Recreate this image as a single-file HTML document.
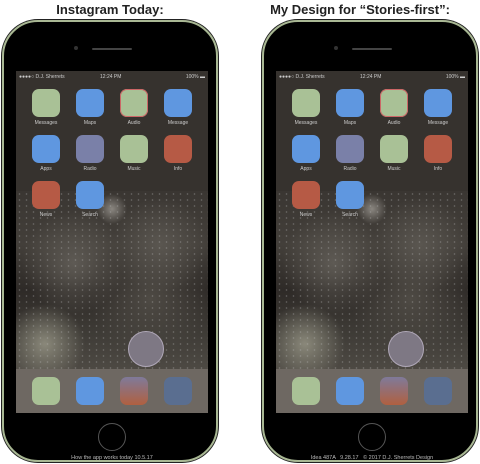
<!DOCTYPE html>
<html><head><style>
*{margin:0;padding:0;box-sizing:border-box}
body{width:480px;height:464px;background:#fff;position:relative;overflow:hidden;font-family:"Liberation Sans",sans-serif}
.title{position:absolute;top:2px;font-size:13px;color:#222;font-weight:bold;width:220px;text-align:center}
.phone{position:absolute;top:20px;width:216px;height:442px;background:#000;border-radius:36px;border:2px solid #a9b894;box-shadow:0 0 0 1px #222}
.scr{position:absolute;left:12px;top:49px;width:192px;height:342px;background:#36322e;overflow:hidden}
.city{position:absolute;left:0;right:0;top:120px;height:180px;background:
radial-gradient(circle at 50% 10%,#8a8680 0,transparent 8%),
radial-gradient(circle at 15% 85%,#8a887a 0,transparent 18%),
radial-gradient(circle at 30% 40%,#5e5a54 0,transparent 30%),
radial-gradient(circle at 75% 30%,#5a5650 0,transparent 25%),
radial-gradient(circle at 70% 60%,#4e4a44 0,transparent 35%),
linear-gradient(#3a3632,#433f3a 30%,#2e2a27 55%,#3f3c37 80%,#4e4a44)}
.city:after{content:"";position:absolute;inset:0;background:radial-gradient(circle,#bbb 0.6px,transparent 1px) 0 0/7px 6px;opacity:.35}
.st{position:absolute;top:3px;font-size:5px;color:#ccc}
.ic{position:absolute;width:28px;height:28px;border-radius:7px}
.lb{position:absolute;width:44px;text-align:center;font-size:5px;color:#ccc}
.g{background:#a9c196}.b{background:#5f97e0}.r{background:#b65a45}
.dock{position:absolute;left:0;bottom:0;width:192px;height:44px;background:#6e6862}
.home{position:absolute;left:94px;top:401px;width:28px;height:28px;border-radius:50%;border:1.5px solid #555}
.cap{position:absolute;top:433px;width:216px;text-align:center;font-size:5.5px;color:#bbb}
.spk{position:absolute;left:88px;top:26px;width:40px;height:2px;background:#444;border-radius:1px}
.cam{position:absolute;left:70px;top:24px;width:4px;height:4px;border-radius:50%;background:#333}
.clock{position:absolute;left:112px;top:260px;width:36px;height:36px;border-radius:50%;background:#7e7884;border:1px solid #b0a8b8}
</style></head><body>
<div class="title" style="left:0">Instagram Today:</div>
<div class="title" style="left:250px">My Design for “Stories-first”:</div>

<div class="phone" style="left:2px">
<div class="cam"></div><div class="spk"></div>
<div class="scr">
<div class="city"></div>
<div class="st" style="left:3px">●●●●○ D.J. Sherrets</div>
<div class="st" style="left:84px">12:24 PM</div>
<div class="st" style="right:3px">100% ▬</div>
<div class="ic g" style="left:16px;top:18px"></div><div class="ic b" style="left:60px;top:18px"></div><div class="ic g" style="left:104px;top:18px;box-shadow:inset 0 0 0 1px #c66"></div><div class="ic b" style="left:148px;top:18px"></div>
<div class="lb" style="left:8px;top:49px">Messages</div><div class="lb" style="left:52px;top:49px">Maps</div><div class="lb" style="left:96px;top:49px">Audio</div><div class="lb" style="left:140px;top:49px">Message</div>
<div class="ic b" style="left:16px;top:64px"></div><div class="ic" style="left:60px;top:64px;background:#7a80a8"></div><div class="ic g" style="left:104px;top:64px"></div><div class="ic r" style="left:148px;top:64px"></div>
<div class="lb" style="left:8px;top:95px">Apps</div><div class="lb" style="left:52px;top:95px">Radio</div><div class="lb" style="left:96px;top:95px">Music</div><div class="lb" style="left:140px;top:95px">Info</div>
<div class="ic r" style="left:16px;top:110px"></div><div class="ic b" style="left:60px;top:110px"></div>
<div class="lb" style="left:8px;top:141px">News</div><div class="lb" style="left:52px;top:141px">Search</div>
<div class="clock"></div>
<div class="dock">
<div class="ic g" style="left:16px;top:8px"></div><div class="ic b" style="left:60px;top:8px"></div><div class="ic" style="left:104px;top:8px;background:linear-gradient(#7f7a9a,#b06040)"></div><div class="ic" style="left:148px;top:8px;background:#5a6e90"></div>
</div>
</div>
<div class="home"></div>
<div class="cap">How the app works today 10.5.17</div>
</div>

<div class="phone" style="left:262px">
<div class="cam"></div><div class="spk"></div>
<div class="scr">
<div class="city"></div>
<div class="st" style="left:3px">●●●●○ D.J. Sherrets</div>
<div class="st" style="left:84px">12:24 PM</div>
<div class="st" style="right:3px">100% ▬</div>
<div class="ic g" style="left:16px;top:18px"></div><div class="ic b" style="left:60px;top:18px"></div><div class="ic g" style="left:104px;top:18px;box-shadow:inset 0 0 0 1px #c66"></div><div class="ic b" style="left:148px;top:18px"></div>
<div class="lb" style="left:8px;top:49px">Messages</div><div class="lb" style="left:52px;top:49px">Maps</div><div class="lb" style="left:96px;top:49px">Audio</div><div class="lb" style="left:140px;top:49px">Message</div>
<div class="ic b" style="left:16px;top:64px"></div><div class="ic" style="left:60px;top:64px;background:#7a80a8"></div><div class="ic g" style="left:104px;top:64px"></div><div class="ic r" style="left:148px;top:64px"></div>
<div class="lb" style="left:8px;top:95px">Apps</div><div class="lb" style="left:52px;top:95px">Radio</div><div class="lb" style="left:96px;top:95px">Music</div><div class="lb" style="left:140px;top:95px">Info</div>
<div class="ic r" style="left:16px;top:110px"></div><div class="ic b" style="left:60px;top:110px"></div>
<div class="lb" style="left:8px;top:141px">News</div><div class="lb" style="left:52px;top:141px">Search</div>
<div class="clock"></div>
<div class="dock">
<div class="ic g" style="left:16px;top:8px"></div><div class="ic b" style="left:60px;top:8px"></div><div class="ic" style="left:104px;top:8px;background:linear-gradient(#7f7a9a,#b06040)"></div><div class="ic" style="left:148px;top:8px;background:#5a6e90"></div>
</div>
</div>
<div class="home"></div>
<div class="cap">Idea 487A &nbsp; 9.28.17 &nbsp; © 2017 D.J. Sherrets Design</div>
</div>
</body></html>
